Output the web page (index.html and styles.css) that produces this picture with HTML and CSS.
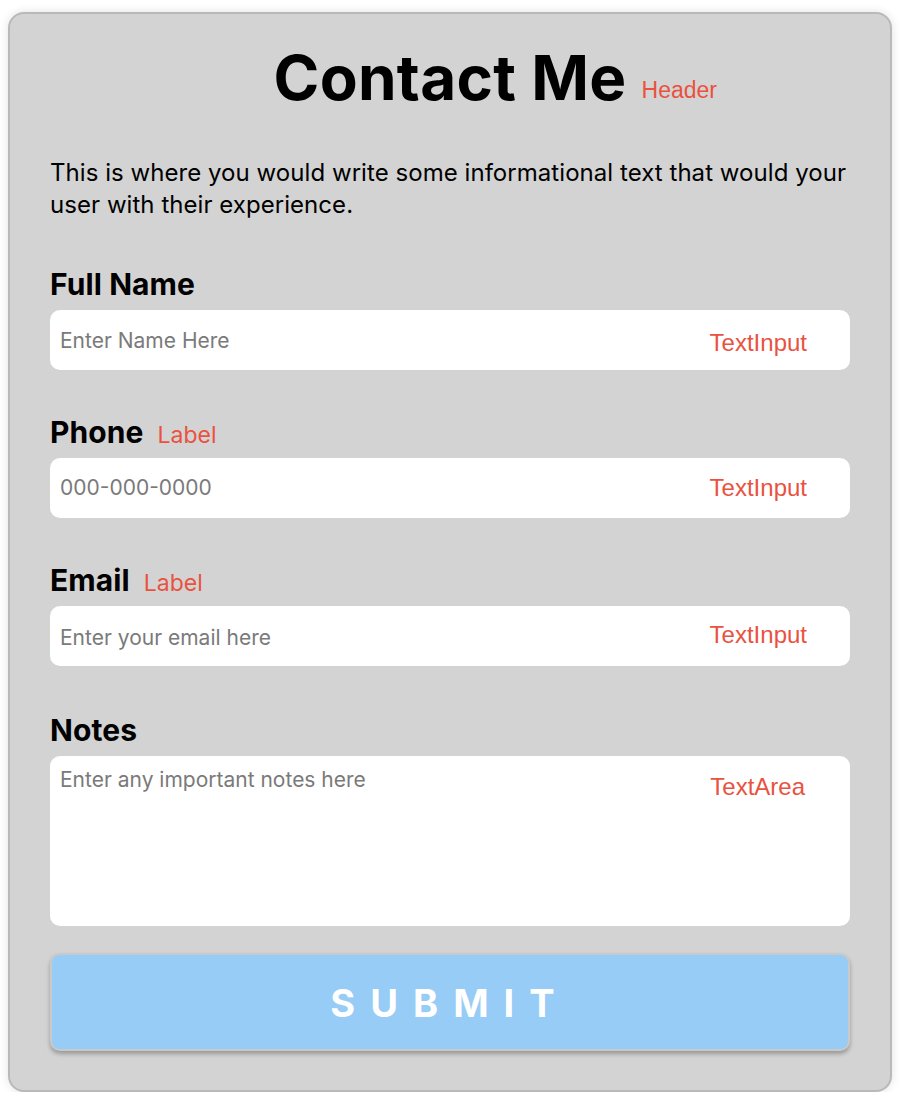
FILE: index.html
```html
<!DOCTYPE html>
<html lang="en">
<head>
<meta charset="utf-8">
<title>Contact Me</title>
<link rel="stylesheet" href="styles.css">
</head>
<body>
<div class="card">
  <div class="title-row">
    <h1 class="title">Contact Me<span class="tag tag-header">Header</span></h1>
  </div>
  <p class="intro">This is where you would write some informational text that would your user with their experience.</p>

  <div class="field field-first">
    <div class="label-row"><span class="label">Full Name</span></div>
    <div class="input"><span class="placeholder ph-name">Enter Name Here</span><span class="tag tag-input tag-name">TextInput</span></div>
  </div>

  <div class="field">
    <div class="label-row"><span class="label">Phone</span><span class="tag-label">Label</span></div>
    <div class="input"><span class="placeholder ph-phone">000-000-0000</span><span class="tag tag-input tag-phone">TextInput</span></div>
  </div>

  <div class="field">
    <div class="label-row"><span class="label">Email</span><span class="tag-label">Label</span></div>
    <div class="input"><span class="placeholder ph-email">Enter your email here</span><span class="tag tag-input tag-email">TextInput</span></div>
  </div>

  <div class="field field-notes">
    <div class="label-row"><span class="label">Notes</span></div>
    <div class="textarea"><span class="placeholder">Enter any important notes here</span><span class="tag tag-area">TextArea</span></div>
  </div>

  <button class="submit" type="button">SUBMIT</button>
</div>
</body>
</html>
```

FILE: styles.css
```css
html, body {
  margin: 0;
  padding: 0;
  background: #ffffff;
}

body {
  font-family: Inter, "Noto Sans", sans-serif;
  color: #000;
}

.card {
  box-sizing: border-box;
  width: 884px;
  height: 1080px;
  margin: 12px 0 0 8px;
  border: 2px solid #b9b9b9;
  border-radius: 16px;
  background: #d3d3d3;
  box-shadow: 0 0 10px rgba(0, 0, 0, 0.12);
  padding: 28px 40px 0 40px;
  display: flex;
  flex-direction: column;
}

.title-row {
  display: flex;
  justify-content: center;
}

.title {
  position: relative;
  margin: 0;
  font-size: 62px;
  line-height: 72px;
  font-weight: 700;
  letter-spacing: 0.3px;
}

.tag {
  font-family: "Liberation Sans", Arial, sans-serif;
  font-weight: 400;
  color: #e9523f;
  font-size: 24px;
  letter-spacing: 0;
}

.tag-header {
  position: absolute;
  left: calc(100% + 15px);
  bottom: 12px;
  line-height: 24px;
  font-size: 23px;
  white-space: nowrap;
}

.intro {
  margin: 43px 0 0 0;
  font-size: 24px;
  line-height: 32px;
  letter-spacing: 0.05px;
}

.field {
  margin-top: 44px;
}

.field-first {
  margin-top: 45px;
}

.field-notes {
  margin-top: 46px;
}

.label-row {
  display: flex;
  align-items: baseline;
  gap: 14px;
  height: 36px;
  line-height: 36px;
  margin-bottom: 8px;
}

.label {
  font-size: 30px;
  font-weight: 700;
  letter-spacing: 0.1px;
}

.tag-label {
  font-size: 23px;
  line-height: 28px;
  color: #e9523f;
}

.input, .textarea {
  position: relative;
  box-sizing: border-box;
  background: #ffffff;
  border-radius: 10px;
  padding: 0 10px;
}

.input {
  height: 60px;
  display: flex;
  align-items: center;
}

.textarea {
  height: 170px;
  padding-top: 12px;
}

.placeholder {
  font-size: 21px;
  line-height: 24px;
  color: #7a7a7a;
  display: block;
}

.ph-name {
  margin-top: 2px;
}

.ph-phone {
  margin-top: 0;
}

.ph-email {
  margin-top: 4px;
}

.tag-input {
  position: absolute;
  right: 43px;
  line-height: 26px;
}

.tag-name {
  top: 20px;
}

.tag-phone {
  top: 17px;
}

.tag-email {
  top: 16px;
}

.tag-area {
  position: absolute;
  right: 45px;
  top: 18px;
  line-height: 26px;
}

.submit {
  margin-top: 27px;
  height: 98px;
  width: 100%;
  border: 2px solid #c9c9c9;
  border-radius: 10px;
  background: #96ccf5;
  box-shadow: 0 3px 4px rgba(0, 0, 0, 0.28);
  color: #ffffff;
  font-family: Inter, "Noto Sans", sans-serif;
  font-size: 38px;
  font-weight: 700;
  letter-spacing: 15px;
  padding: 0;
  padding-top: 2px;
  cursor: pointer;
}
```
